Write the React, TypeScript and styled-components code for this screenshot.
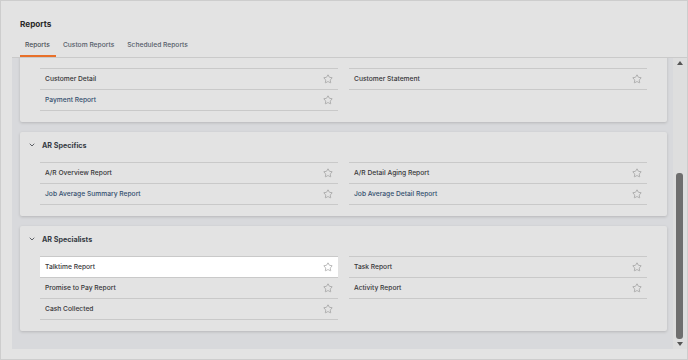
import { useEffect, useRef, useState } from "react";
import styled, { createGlobalStyle } from "styled-components";
import { ChevronDown, Star } from "lucide-react";

type Report = {
  name: string;
  link?: boolean;
  active?: boolean;
};

type Section = {
  title: string;
  left: Report[];
  right: Report[];
};

const sections: Section[] = [
  {
    title: "Accounts",
    left: [
      { name: "Account Summary" },
      { name: "Account Aging" },
      { name: "Account Notes" },
      { name: "Account History" },
      { name: "Account Balances" },
    ],
    right: [{ name: "Account Contacts" }, { name: "Account Status" }],
  },
  {
    title: "Customers",
    left: [{ name: "Customer Detail" }, { name: "Payment Report", link: true }],
    right: [{ name: "Customer Statement" }],
  },
  {
    title: "AR Specifics",
    left: [
      { name: "A/R Overview Report" },
      { name: "Job Average Summary Report", link: true },
    ],
    right: [
      { name: "A/R Detail Aging Report" },
      { name: "Job Average Detail Report", link: true },
    ],
  },
  {
    title: "AR Specialists",
    left: [
      { name: "Talktime Report", active: true },
      { name: "Promise to Pay Report" },
      { name: "Cash Collected" },
    ],
    right: [{ name: "Task Report" }, { name: "Activity Report" }],
  },
];

const GlobalStyle = createGlobalStyle`
  html, body {
    margin: 0;
    padding: 0;
    height: 100%;
    background: #e3e3e3;
    font-family: Inter, "Noto Sans", sans-serif;
  }
  * { box-sizing: border-box; }
`;

const Page = styled.div`
  height: 360px;
  border: 1px solid #cdcdcd;
  background: #e3e3e3;
  display: flex;
  flex-direction: column;
  padding: 0 0 10px 11px;
  overflow: hidden;
`;

const Title = styled.h1`
  margin: 0;
  padding: 17px 0 0 8px;
  height: 37px;
  font-size: 8.2px;
  font-weight: 700;
  line-height: 12px;
  color: #2a2a2a;
`;

const TabBar = styled.div`
  display: flex;
  gap: 2px;
  padding-left: 8px;
  border-bottom: 1px solid #cacaca;
`;

const Tab = styled.div<{ $active?: boolean }>`
  height: 19px;
  padding: 0 6px 3px 5px;
  display: flex;
  align-items: center;
  font-size: 6.7px;
  font-weight: 500;
  color: ${(p) => (p.$active ? "#4a4f57" : "#555d6a")};
  border-bottom: 2px solid ${(p) => (p.$active ? "#e8702a" : "transparent")};
`;

const ScrollArea = styled.div`
  flex: 1;
  min-height: 0;
  display: flex;
  background: #d8d9dc;
`;

const Content = styled.div`
  flex: 1;
  overflow: hidden;
  display: flex;
  flex-direction: column;
  gap: 10px;
  padding: 8px 6px 18px 8px;
`;

const Card = styled.section`
  flex-shrink: 0;
  background: #e3e3e3;
  border-radius: 2px;
  box-shadow: 0 1px 3px rgba(0, 0, 0, 0.16);
  padding-bottom: 11px;
`;

const CardHeader = styled.div`
  height: 25px;
  display: flex;
  align-items: center;
  gap: 6px;
  padding: 1px 0 0 8px;
  font-size: 7.2px;
  font-weight: 700;
  color: #363b44;
  svg {
    color: #3b3f46;
  }
`;

const Columns = styled.div`
  display: grid;
  grid-template-columns: 1fr 1fr;
  column-gap: 11px;
  margin: 5px 20px 0;
  align-items: start;
`;

const List = styled.div`
  display: flex;
  flex-direction: column;
`;

const Row = styled.div<{ $active?: boolean; $link?: boolean }>`
  height: 21px;
  border-top: 1px solid #c9c9c9;
  display: flex;
  align-items: center;
  justify-content: space-between;
  padding: 0 5px 0 5px;
  font-size: 6.7px;
  font-weight: 500;
  color: ${(p) => (p.$link ? "#34506f" : "#363638")};
  background: ${(p) => (p.$active ? "#ffffff" : "transparent")};
  &:last-child {
    height: 22px;
    border-bottom: 1px solid #c9c9c9;
  }
  svg {
    color: #8c8c8c;
    flex-shrink: 0;
  }
`;

const Scrollbar = styled.div`
  width: 14px;
  display: flex;
  flex-direction: column;
  align-items: center;
  background: #dedede;
`;

const Arrow = styled.div<{ $down?: boolean }>`
  height: 10px;
  display: flex;
  align-items: center;
  justify-content: center;
  &::after {
    content: "";
    border-left: 3px solid transparent;
    border-right: 3px solid transparent;
    ${(p) =>
      p.$down ? "border-top: 4px solid #555;" : "border-bottom: 4px solid #555;"}
  }
`;

const Track = styled.div`
  flex: 1;
  width: 100%;
  position: relative;
`;

const Thumb = styled.div`
  position: absolute;
  left: 3px;
  width: 7px;
  border-radius: 3px;
  background: #6e6e6e;
`;

const ReportList = ({ items }: { items: Report[] }) => (
  <List>
    {items.map((r) => (
      <Row key={r.name} $active={r.active} $link={r.link}>
        <span>{r.name}</span>
        <Star size={10} strokeWidth={1.4} />
      </Row>
    ))}
  </List>
);

const App = () => {
  const contentRef = useRef<HTMLDivElement>(null);
  const [thumb, setThumb] = useState({ top: 0, height: 0 });

  useEffect(() => {
    const el = contentRef.current;
    if (!el) return;
    el.scrollTop = el.scrollHeight;
    const track = el.clientHeight - 20;
    const height = (track * el.clientHeight) / el.scrollHeight;
    const max = el.scrollHeight - el.clientHeight;
    const top = max > 0 ? ((track - height) * el.scrollTop) / max : 0;
    setThumb({ top, height });
  }, []);

  return (
    <>
      <GlobalStyle />
      <Page>
        <Title>Reports</Title>
        <TabBar>
          <Tab $active>Reports</Tab>
          <Tab>Custom Reports</Tab>
          <Tab>Scheduled Reports</Tab>
        </TabBar>
        <ScrollArea>
          <Content ref={contentRef}>
            {sections.map((s) => (
              <Card key={s.title}>
                <CardHeader>
                  <ChevronDown size={8} strokeWidth={2.4} />
                  {s.title}
                </CardHeader>
                <Columns>
                  <ReportList items={s.left} />
                  <ReportList items={s.right} />
                </Columns>
              </Card>
            ))}
          </Content>
          <Scrollbar>
            <Arrow />
            <Track>
              <Thumb style={{ top: thumb.top, height: thumb.height }} />
            </Track>
            <Arrow $down />
          </Scrollbar>
        </ScrollArea>
      </Page>
    </>
  );
};

export default App;
